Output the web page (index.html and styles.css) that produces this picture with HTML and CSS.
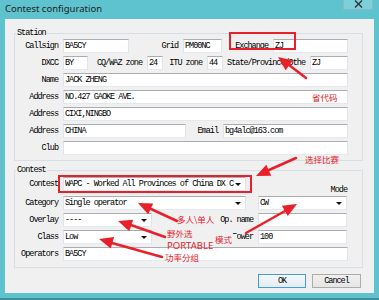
FILE: index.html
```html
<!DOCTYPE html>
<html lang="en">
<head>
  <meta charset="UTF-8" />
  <title>Contest configuration</title>
  <link rel="stylesheet" href="styles.css">
</head>
<body>
  <div class="window">
    <!-- Title bar -->
    <div class="titlebar">
      <span class="title">Contest configuration</span>
      <span class="close">
        <svg width="9" height="8" viewBox="0 0 9 8"><path d="M1 0.5 L8 7.5 M8 0.5 L1 7.5" stroke="#333" stroke-width="1.4"/></svg>
      </span>
    </div>

    <div class="client">
      <!-- Station -->
      <div class="group">
        <div class="group-title">Station</div>
        <div class="rows">
          <div class="row">
            <span class="lbl w48">Callsign</span>
            <input class="w66" value="BA5CY">
            <span class="lbl w54">Grid</span>
            <input class="w39" value="PM00NC">
            <span class="lbl w51">Exchange</span>
            <input class="w75" value="ZJ">
          </div>
          <div class="row">
            <span class="lbl w48">DXCC</span>
            <input class="w25" value="BY">
            <span class="lbl w59">CQ/WAZ zone</span>
            <input class="w16" value="24">
            <span class="lbl w44">ITU zone</span>
            <input class="w16" value="44">
            <span class="lbl w87">State/Province/Othe</span>
            <input class="w38" value="ZJ">
          </div>
          <div class="row">
            <span class="lbl w48">Name</span>
            <input class="w285" value="JACK ZHENG">
          </div>
          <div class="row">
            <span class="lbl w48">Address</span>
            <input class="w285" value="NO.427 GAOKE AVE.">
          </div>
          <div class="row">
            <span class="lbl w48">Address</span>
            <input class="w285" value="CIXI,NINGBO">
          </div>
          <div class="row">
            <span class="lbl w48">Address</span>
            <input class="w123" value="CHINA">
            <span class="lbl w37">Email</span>
            <input class="w125" value="bg4alc@163.com">
          </div>
          <div class="row">
            <span class="lbl w48">Club</span>
            <input class="w285" value="">
          </div>
        </div>
      </div>

      <!-- Contest -->
      <div class="group contest">
        <div class="group-title">Contest</div>
        <div class="rows">
          <div class="row row-contest">
            <span class="lbl w48">Contest</span>
            <div class="combo w183"><span>WAPC - Worked All Provinces of China DX C</span><i class="arrow"></i></div>
            <span class="mode-label">Mode</span>
          </div>
          <div class="row">
            <span class="lbl w48">Category</span>
            <div class="combo w183"><span>Single operator</span><i class="arrow"></i></div>
            <div class="combo w89 ml12"><span>CW</span><i class="arrow"></i></div>
          </div>
          <div class="row">
            <span class="lbl w48">Overlay</span>
            <div class="combo w89"><span>----</span><i class="arrow"></i></div>
            <span class="lbl w106">Op. name</span>
            <input class="w89" value="">
          </div>
          <div class="row">
            <span class="lbl w48">Class</span>
            <div class="combo w89"><span>Low</span><i class="arrow"></i></div>
            <span class="lbl w106">Power</span>
            <input class="w89" value="100">
          </div>
          <div class="row">
            <span class="lbl w48">Operators</span>
            <input class="w285" value="BA5CY">
          </div>
        </div>
      </div>

      <div class="buttons">
        <button class="btn default">OK</button>
        <button class="btn">Cancel</button>
      </div>
    </div>

    <!-- Red annotations drawn over the dialog -->
    <svg class="notes" width="379" height="300" viewBox="0 0 379 300">
      <g fill="none" stroke="#e8202a" stroke-width="2">
        <rect x="230" y="33" width="65" height="16"/>
        <rect x="59" y="176" width="192" height="16"/>
      </g>
      <g stroke="#e8202a" stroke-width="2.5" stroke-linecap="round">
        <line x1="306" y1="78" x2="289" y2="65"/>
        <line x1="296" y1="158" x2="269" y2="170"/>
        <line x1="177" y1="221" x2="151" y2="209"/>
        <line x1="165" y1="237" x2="131" y2="225"/>
        <line x1="162" y1="257" x2="112" y2="243"/>
        <line x1="246" y1="233" x2="285" y2="211"/>
      </g>
      <g fill="#e8202a">
        <polygon points="278,57 292.8,60.6 285.6,70.2"/>
        <polygon points="256,176 266.3,164.8 271.2,175.7"/>
        <polygon points="138,203 153.2,203.4 148.2,214.3"/>
        <polygon points="118,221 133.2,219.8 129.3,231.2"/>
        <polygon points="99,239 114.1,237.1 110.8,248.6"/>
        <polygon points="297,204 287.8,216.1 281.9,205.7"/>
      </g>
      <rect x="214" y="234" width="23" height="10" fill="#f0f0f0"/>
      <g class="note-text">
        <text x="312" y="101">省代码</text>
        <text x="305" y="163">选择比赛</text>
        <text x="177" y="223">多人\单人</text>
        <text x="167" y="237">野外选</text>
        <text x="167" y="249" class="latin">PORTABLE</text>
        <text x="165" y="261">功率分组</text>
        <text x="215" y="243">模式</text>
      </g>
    </svg>
  </div>
</body>
</html>
```

FILE: styles.css
```css
body {
  margin: 0;
  background-color: #ffffff;
}

.window {
  position: relative;
  width: 379px;
  height: 300px;
  box-sizing: border-box;
  padding: 0 5px 7px 5px;
  background-color: #5fc3cf;
  border-bottom: 2px solid #3f8f99;
}

.titlebar {
  display: flex;
  align-items: flex-start;
  justify-content: space-between;
  height: 19px;
}

.title {
  font: 9.5px "Noto Sans", sans-serif;
  color: #1e1e1e;
  line-height: 12px;
  margin-top: 3px;
}

.close {
  display: flex;
  align-items: center;
  justify-content: center;
  width: 30px;
  height: 11px;
  margin-top: -1px;
  margin-right: 1px;
  box-sizing: border-box;
  border: 1px solid #8fb7bd;
  border-top: none;
  background-color: #7cd0da;
}

.client {
  height: 274px;
  box-sizing: border-box;
  padding: 14px 11px 0 9px;
  background-color: #f0f0f0;
  font: 8.5px "Liberation Mono", monospace;
  letter-spacing: -1px;
  color: #000;
}

.group {
  border: 1px solid #d5dfe5;
  padding-bottom: 5px;
}

.group.contest {
  margin-top: 9px;
  padding-bottom: 6px;
}

.group-title {
  width: fit-content;
  margin: -6px 0 0 1px;
  padding: 0 1px;
  line-height: 10px;
  background-color: #f0f0f0;
}

.rows {
  display: flex;
  flex-direction: column;
  gap: 3px;
  margin-top: 1px;
}

.contest .rows {
  margin-top: 2px;
}

.row {
  display: flex;
  align-items: center;
  height: 14px;
}

.row-contest {
  height: 16px;
  align-items: flex-start;
}

.lbl {
  box-sizing: border-box;
  padding-right: 5px;
  text-align: right;
  white-space: nowrap;
  line-height: 14px;
}

input {
  height: 14px;
  box-sizing: border-box;
  padding: 0 1px;
  border: 1px solid;
  border-color: #abadb3 #e2e3ea #e3e9ef #e2e3ea;
  background-color: #fff;
  font: inherit;
  letter-spacing: inherit;
  color: inherit;
  outline: none;
}

.combo {
  display: flex;
  align-items: center;
  height: 14px;
  box-sizing: border-box;
  padding: 0 4px 0 1px;
  border: 1px solid;
  border-color: #abadb3 #e2e3ea #e3e9ef #e2e3ea;
  background-color: #fff;
  white-space: nowrap;
  overflow: hidden;
}

.combo span {
  flex: 1;
  overflow: hidden;
}

.arrow {
  width: 0;
  height: 0;
  border-left: 3px solid transparent;
  border-right: 3px solid transparent;
  border-top: 3px solid #111;
}

.mode-label {
  flex: 1;
  align-self: flex-end;
  margin-bottom: -2px;
  padding-right: 15px;
  text-align: right;
  line-height: 10px;
}

.ml12 { margin-left: 12px; }

.w16 { width: 16px; }
.w25 { width: 25px; }
.w37 { width: 37px; }
.w38 { width: 38px; }
.w39 { width: 39px; }
.w44 { width: 44px; }
.w48 { width: 48px; }
.w51 { width: 51px; }
.w54 { width: 54px; }
.w59 { width: 59px; }
.w66 { width: 66px; }
.w75 { width: 75px; }
.w87 { width: 87px; }
.w89 { width: 89px; }
.w106 { width: 106px; }
.w123 { width: 123px; }
.w125 { width: 125px; }
.w183 { width: 183px; }
.w285 { width: 285px; }

.buttons {
  display: flex;
  justify-content: flex-end;
  gap: 6px;
  margin-top: 6px;
  padding-right: 2px;
}

.btn {
  width: 49px;
  height: 14px;
  padding: 0;
  border: 1px solid #acacac;
  background: linear-gradient(#f0f0f0, #e5e5e5);
  font: inherit;
  letter-spacing: inherit;
  color: inherit;
}

.btn.default {
  width: 48px;
  border-color: #4a9ad8;
  background: linear-gradient(#f4f8fb, #e4edf4);
}

.notes {
  position: absolute;
  left: 0;
  top: 0;
  pointer-events: none;
}

.note-text {
  font: 8.5px "Noto Sans CJK SC", sans-serif;
  fill: #e8202a;
}

.note-text .latin {
  font: 9.5px "Noto Sans", sans-serif;
}
```
